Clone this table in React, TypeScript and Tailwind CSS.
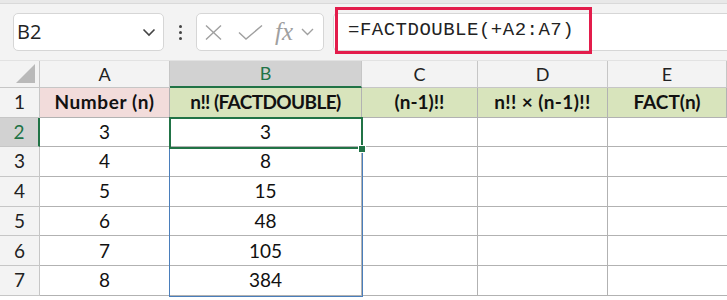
import React from 'react';

const cols = ['A', 'B', 'C', 'D', 'E'];
const headers = [
  { text: 'Number (n)', cls: 'bg-[#f2dcdb] tracking-[0.6px]' },
  { text: 'n!! (FACTDOUBLE)', cls: 'bg-[#d8e4bc] tracking-[-0.6px]' },
  { text: '(n-1)!!', cls: 'bg-[#d8e4bc]' },
  { text: 'n!! × (n-1)!!', cls: 'bg-[#d8e4bc] tracking-[0.4px]' },
  { text: 'FACT(n)', cls: 'bg-[#d8e4bc]' },
];
const rows = [
  ['3', '3'],
  ['4', '8'],
  ['5', '15'],
  ['6', '48'],
  ['7', '105'],
  ['8', '384'],
];

const cellFont = { fontFamily: 'Lato, "Open Sans", sans-serif' };

export default function App() {
  return (
    <div className="w-[727px] h-[300px] overflow-hidden bg-white" style={cellFont}>
      {/* formula bar */}
      <div className="h-[4px] bg-[#e8e8e8] border-b border-[#d9d9d9]" />
      <div className="h-[57px] bg-[#f3f3f3] flex items-center pl-[13px] border-b border-[#e2e2e2]">
        <div className="w-[151px] h-[38px] bg-white border border-[#d6d6d6] rounded-[5px] flex items-center justify-between pl-[3px] pr-[7px]">
          <span className="text-[20px] text-[#222]" style={{ fontFamily: '"Open Sans", sans-serif' }}>B2</span>
          <svg width="14" height="9" viewBox="0 0 14 9" fill="none" stroke="#444" strokeWidth="1.6">
            <path d="M1.5 1.5 L7 7 L12.5 1.5" />
          </svg>
        </div>
        <div className="w-[32px] flex flex-col items-center gap-[3px]">
          <span className="w-[3px] h-[3px] bg-[#444] rounded-full" />
          <span className="w-[3px] h-[3px] bg-[#444] rounded-full" />
          <span className="w-[3px] h-[3px] bg-[#444] rounded-full" />
        </div>
        <div className="w-[128px] h-[38px] bg-white border border-[#d6d6d6] rounded-[5px] flex items-center pl-[8px]">
          <svg width="17" height="15" viewBox="0 0 17 15" stroke="#a0a0a0" strokeWidth="1.4" fill="none">
            <path d="M1 0.5 L16 14.5 M16 0.5 L1 14.5" />
          </svg>
          <svg className="ml-[16px]" width="25" height="15" viewBox="0 0 25 15" stroke="#a0a0a0" strokeWidth="1.4" fill="none">
            <path d="M1 7.5 L8 14 L24 0.5" />
          </svg>
          <span className="ml-[12px] text-[25px] italic text-[#a0a0a0] leading-none pb-[2px]" style={{ fontFamily: '"Liberation Serif", serif' }}>fx</span>
          <svg className="ml-[8px]" width="13" height="8" viewBox="0 0 13 8" fill="none" stroke="#a0a0a0" strokeWidth="1.4">
            <path d="M1 1 L6.5 6.5 L12 1" />
          </svg>
        </div>
        <div className="ml-[9px] flex-1 h-[38px] bg-white border-y border-l border-[#d6d6d6] rounded-l-[5px] relative">
          <div className="absolute left-[1px] top-[-7px] w-[257px] h-[47px] border-[3px] border-[#e31c4b] flex items-center pl-[10px]">
            <span className="text-[19px] tracking-[0.5px] text-[#222]" style={{ fontFamily: '"Liberation Mono", monospace' }}>
              =FACTDOUBLE(+A2:A7)
            </span>
          </div>
        </div>
      </div>

      {/* sheet */}
      <div className="relative">
        <div className="grid grid-cols-[40px_130px_192px_116px_130px_1fr] grid-rows-[27px_repeat(7,29.7px)] text-[19px] text-[#111]">
          {/* corner */}
          <div className="bg-[#f3f3f3] border-r border-b border-[#c6c6c6] relative">
            <svg className="absolute right-[4px] bottom-[4px]" width="19" height="19" viewBox="0 0 19 19">
              <path d="M19 0 L19 19 L0 19 Z" fill="#b9b9b9" />
            </svg>
          </div>
          {cols.map((c) =>
            c === 'B' ? (
              <div key={c} className="bg-[#d2d2d2] border-r border-[#c6c6c6] border-b-2 border-b-[#217346] flex items-center justify-center text-[#217346] text-[18px]">
                {c}
              </div>
            ) : (
              <div key={c} className="bg-[#f3f3f3] border-r border-b border-[#c6c6c6] flex items-center justify-center text-[#222] text-[18px]">
                {c}
              </div>
            )
          )}

          {/* row 1 */}
          <div className="bg-[#f3f3f3] border-r border-b border-[#c6c6c6] flex items-center justify-center text-[#222]">1</div>
          {headers.map((h) => (
            <div
              key={h.text}
              className={`${h.cls} border-r border-b border-[#b2b2b2] flex items-center justify-center font-bold whitespace-nowrap`}
            >
              {h.text}
            </div>
          ))}

          {rows.map((r, idx) => {
            const n = idx + 2;
            return (
              <React.Fragment key={n}>
                {n === 2 ? (
                  <div className="bg-[#d2d2d2] border-b border-[#c6c6c6] border-r-2 border-r-[#217346] flex items-center justify-center text-[#217346]">
                    {n}
                  </div>
                ) : (
                  <div className="bg-[#f3f3f3] border-r border-b border-[#c6c6c6] flex items-center justify-center text-[#222]">
                    {n}
                  </div>
                )}
                <div className="border-r border-b border-[#b2b2b2] flex items-center justify-center">{r[0]}</div>
                <div className="border-r border-b border-[#b2b2b2] flex items-center justify-center">{r[1]}</div>
                <div className="border-r border-b border-[#b2b2b2]" />
                <div className="border-r border-b border-[#b2b2b2]" />
                <div className="border-b border-[#b2b2b2]" />
              </React.Fragment>
            );
          })}
        </div>

        {/* spill range and active cell */}
        <div className="absolute left-[169px] top-[56px] w-[194px] h-[180px] border-[1.5px] border-[#4a7ebb] pointer-events-none" />
        <div className="absolute left-[169px] top-[56px] w-[194px] h-[32px] border-2 border-[#217346] pointer-events-none" />
        <div className="absolute left-[358px] top-[84px] w-[8px] h-[8px] bg-[#217346] border border-white pointer-events-none" />
      </div>
    </div>
  );
}
